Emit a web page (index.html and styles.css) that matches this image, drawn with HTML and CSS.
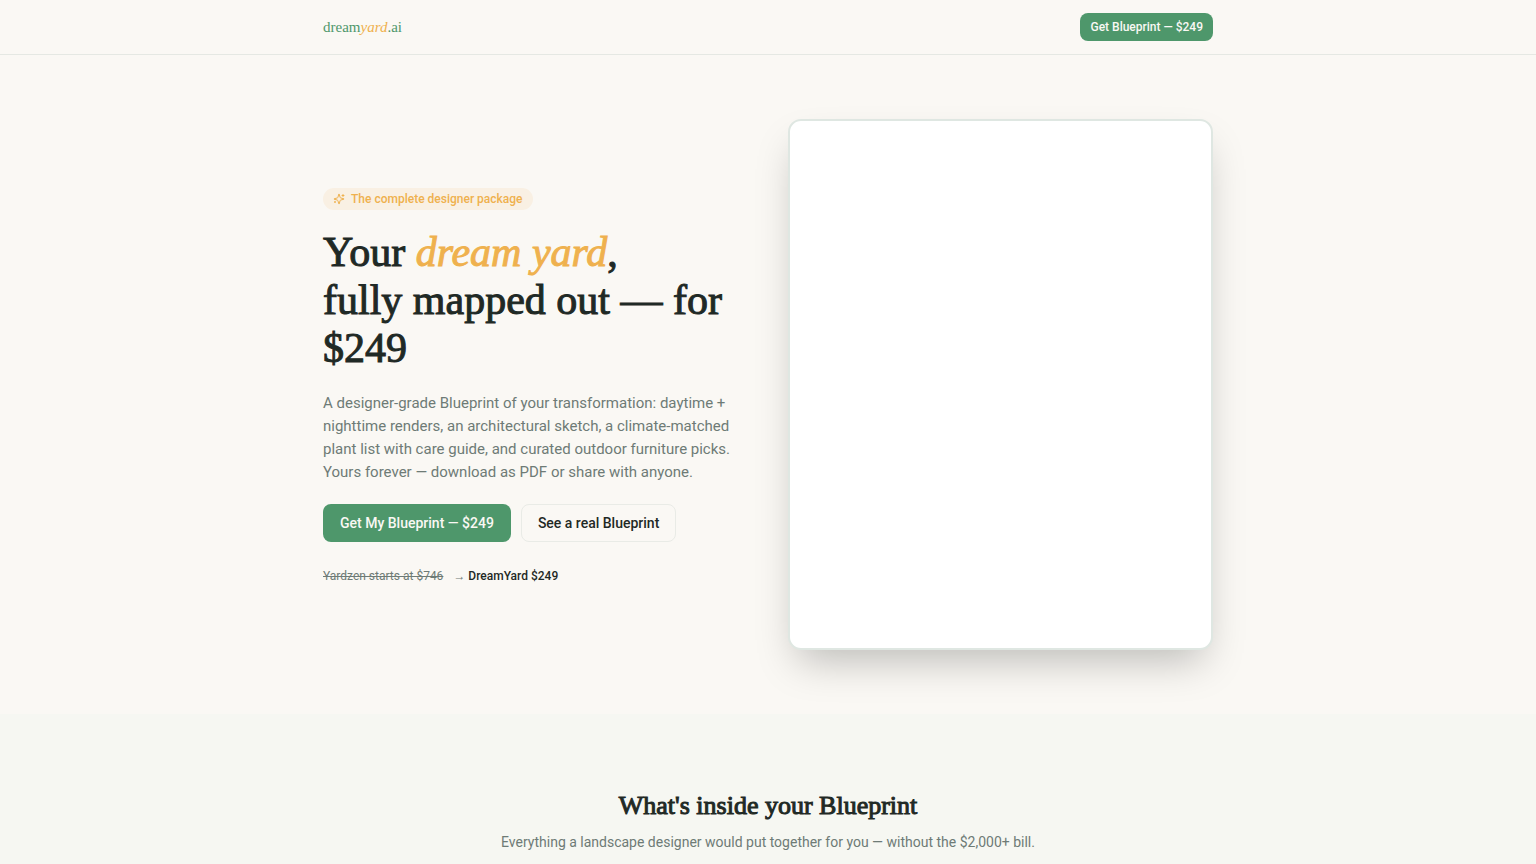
FILE: index.html
```html
<!DOCTYPE html>
<html lang="en">
<head>
    <meta charset="UTF-8">
    <meta name="viewport" content="width=device-width, initial-scale=1.0">
    <title>DreamYard Blueprint</title>
    <link rel="stylesheet" href="styles.css">
</head>
<body>

    <!-- Header -->
    <header class="site-header">
        <div class="container header-inner">
            <a href="#" class="logo">dream<em>yard</em>.ai</a>
            <button type="button" class="btn btn-primary btn-small">Get Blueprint — $249</button>
        </div>
    </header>

    <main>
        <!-- Hero -->
        <section class="container hero">
            <div class="hero-text">
                <span class="badge">
                    <svg class="badge-icon" viewBox="0 0 24 24" fill="none" stroke="currentColor" stroke-width="2" stroke-linecap="round" stroke-linejoin="round" aria-hidden="true">
                        <path d="M9.937 15.5A2 2 0 0 0 8.5 14.063l-6.135-1.582a.5.5 0 0 1 0-.962L8.5 9.936A2 2 0 0 0 9.937 8.5l1.582-6.135a.5.5 0 0 1 .963 0L14.063 8.5A2 2 0 0 0 15.5 9.937l6.135 1.581a.5.5 0 0 1 0 .964L15.5 14.063a2 2 0 0 0-1.437 1.437l-1.582 6.135a.5.5 0 0 1-.963 0z"/>
                        <path d="M20 3v4"/>
                        <path d="M22 5h-4"/>
                        <path d="M4 17v2"/>
                        <path d="M5 18H3"/>
                    </svg>
                    The complete designer package
                </span>
                <h1>Your <em>dream yard</em>,<br>fully mapped out — for $249</h1>
                <p class="lead">A designer-grade Blueprint of your transformation: daytime + nighttime renders, an architectural sketch, a climate-matched plant list with care guide, and curated outdoor furniture picks. Yours forever — download as PDF or share with anyone.</p>
                <div class="hero-actions">
                    <button type="button" class="btn btn-primary">Get My Blueprint — $249</button>
                    <a href="#inside" class="btn btn-outline">See a real Blueprint</a>
                </div>
                <div class="compare">
                    <s>Yardzen starts at $746</s>
                    <span>→ <strong>DreamYard $249</strong></span>
                </div>
            </div>
            <div class="preview"></div>
        </section>

        <!-- What's inside -->
        <section id="inside" class="inside">
            <div class="container">
                <h2>What's inside your Blueprint</h2>
                <p>Everything a landscape designer would put together for you — without the $2,000+ bill.</p>
            </div>
        </section>
    </main>

</body>
</html>
```

FILE: styles.css
```css
* {
    box-sizing: border-box;
}

body {
    margin: 0;
    font-family: "Roboto", sans-serif;
    font-size: 14px;
    line-height: 20px;
    color: #1f2925;
    background-color: #faf8f4;
}

h1, h2, p {
    margin: 0;
}

h1, h2, .logo {
    font-family: "Liberation Serif", serif;
    font-weight: 400;
}

/* Slightly heavier than regular, lighter than bold */
h1, h2 {
    -webkit-text-stroke: 1px currentColor;
}

.container {
    max-width: 922px;
    margin: 0 auto;
    padding: 0 16px;
}

/* Header */
.site-header {
    border-bottom: 1px solid #e5e8e3;
}

.header-inner {
    display: flex;
    justify-content: space-between;
    align-items: center;
    padding-top: 13px;
    padding-bottom: 13px;
}

.logo {
    font-size: 15px;
    color: #4e976b;
    text-decoration: none;
}

.logo em, h1 em {
    color: #efb14e;
}

/* Buttons */
.btn {
    font-family: inherit;
    font-size: 14px;
    font-weight: 500;
    line-height: 20px;
    padding: 8px 16px;
    border: 1px solid transparent;
    border-radius: 8px;
    text-decoration: none;
    cursor: pointer;
}

.btn-primary {
    background-color: #4e976b;
    color: #faf8f4;
}

.btn-primary:hover {
    background-color: #43855d;
}

.btn-outline {
    border-color: #e9ebe6;
    color: #1f2925;
}

.btn-small {
    font-size: 12px;
    padding: 3px 9px;
}

/* Hero */
.hero {
    display: grid;
    grid-template-columns: 1fr 1fr;
    gap: 40px;
    align-items: center;
    padding-top: 64px;
    padding-bottom: 64px;
}

.hero-text {
    padding-top: 4px;
}

.badge {
    display: inline-flex;
    align-items: center;
    gap: 6px;
    padding: 1px 10px;
    border-radius: 99px;
    background-color: #f9f0e3;
    color: #efb14e;
    font-size: 12px;
    font-weight: 500;
}

.badge-icon {
    width: 12px;
    height: 12px;
}

h1 {
    margin-top: 18px;
    font-size: 42px;
    line-height: 48px;
}

.lead {
    margin-top: 20px;
    font-size: 15px;
    line-height: 23px;
    color: #6e7b76;
}

.hero-actions {
    display: flex;
    gap: 10px;
    margin-top: 20px;
}

.compare {
    display: flex;
    gap: 10px;
    margin-top: 24px;
    font-size: 12px;
    color: #6e7b76;
}

.compare strong {
    font-weight: 500;
    color: #1f2925;
}

.preview {
    aspect-ratio: 4 / 5;
    background-color: #fff;
    border: 2px solid #dfe7e2;
    border-radius: 13px;
    box-shadow: 0 20px 40px -10px rgba(0, 0, 0, 0.25);
}

/* What's inside */
.inside {
    padding: 72px 0;
    background-color: #f6f7f2;
    text-align: center;
}

h2 {
    font-size: 26px;
    line-height: 40px;
}

.inside p {
    margin-top: 6px;
    color: #6e7b76;
}
```
